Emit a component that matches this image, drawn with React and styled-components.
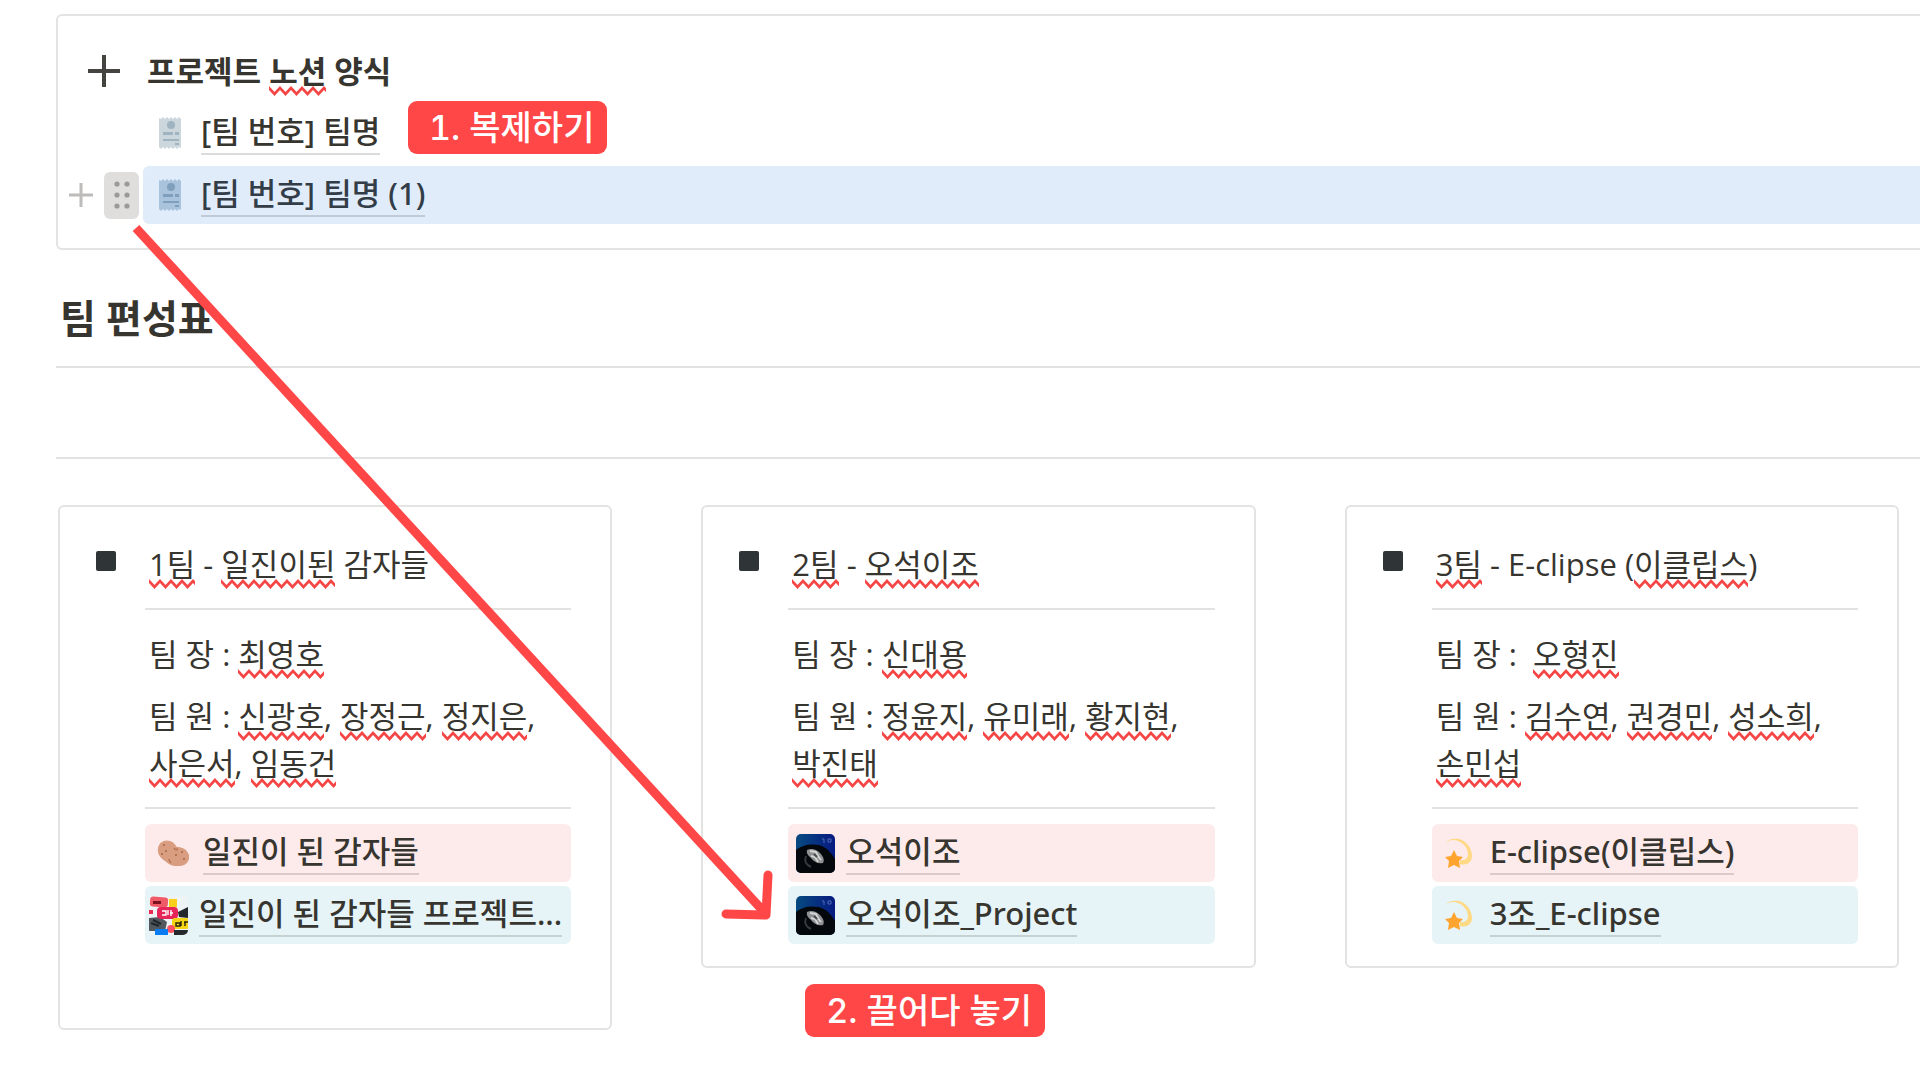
import React from "react";
import styled, { createGlobalStyle } from "styled-components";

const GlobalStyle = createGlobalStyle`
  * { box-sizing: border-box; }
  body {
    margin: 0;
    background: #fff;
    color: #37352f;
    font-family: "Open Sans", "Noto Sans CJK KR", sans-serif;
    font-size: 31px;
    line-height: 47px;
  }
  p, h1, h2 { margin: 0; }
`;

const squiggle = encodeURIComponent(
  '<svg xmlns="http://www.w3.org/2000/svg" width="11" height="10"><path d="M-5.5 8 L0 2 L5.5 8 L11 2 L16.5 8" fill="none" stroke="#f54545" stroke-width="2.6"/></svg>'
);

const Page = styled.main`position: relative; min-height: 100vh; padding: 14px 0 0 56px; overflow: hidden;`;

const TemplateBox = styled.section`
  display: grid;
  gap: 4px;
  padding: 26px 0 24px;
  border: 2px solid #e3e3e2;
  border-right: none;
  border-radius: 6px 0 0 6px;
`;
const TemplateRow = styled.div`position: relative; display: grid; grid-template-columns: 85px 1fr;`;
const Gutter = styled.div`display: flex; align-items: center; padding-left: ${(p) => p.$pad}px;`;
const BoxTitle = styled.h1`padding: 6px 4px 5px; font-size: 31px; font-weight: 700;`;

const AddButton = styled.button`display: flex; width: 24px; padding: 0; border: none; background: none;`;
const HandleButton = styled.button`
  display: flex;
  align-items: center;
  justify-content: center;
  width: 35px;
  height: 47px;
  margin-left: 11px;
  padding: 0;
  border: none;
  border-radius: 6px;
  background: #dfdedd;
`;

const PageLink = styled.a`
  display: flex;
  align-items: center;
  height: 58px;
  padding-left: ${(p) => (p.$tight ? 0 : 4)}px;
  border-radius: ${(p) => (p.$bleed ? "6px 0 0 6px" : "6px")};
  background: ${(p) => p.$bg || "transparent"};
  color: ${(p) => p.$color || "#37352f"};
  font-family: "Noto Sans", "Noto Sans CJK KR", sans-serif;
  font-weight: 500;
  text-decoration: none;
  white-space: nowrap;
`;
const LinkIcon = styled.span`display: flex; justify-content: center; width: 47px; margin-right: 7px;`;
const LinkText = styled.span`height: 43px; line-height: 39px; border-bottom: 2px solid rgba(55, 53, 47, 0.18);`;

const Heading = styled.h2`margin: 42px 0 22px; padding-left: 4px; font-size: 39px; line-height: 52px; font-weight: 700;`;
const Rule = styled.hr`margin: 0 0 ${(p) => p.$space}px; border: none; border-top: 2px solid #e2e2e1;`;

const Teams = styled.section`
  display: grid;
  grid-template-columns: repeat(3, 1fr);
  align-items: start;
  gap: 89px;
  padding: 0 21px 0 2px;
`;
const TeamColumn = styled.div`position: relative;`;
const TeamCard = styled.article`
  display: grid;
  grid-template-columns: 85px 1fr;
  padding: 28px 39px 22px 0;
  border: 2px solid #e3e3e2;
  border-radius: 6px;
`;
const Bullet = styled.span`width: 20px; height: 20px; margin: 16px 0 0 36px; border-radius: 2px; background: #2f3437;`;
const TeamBody = styled.div`min-width: 0;`;
const Line = styled.p`padding: 6px 4px 5px; white-space: pre-wrap;`;
const CardRule = styled.hr`margin: 15px 0; border: none; border-top: 2px solid #e2e2e1;`;
const People = styled.div`display: grid; gap: 4px;`;
const Links = styled.div`display: grid; gap: 4px;`;
const EmptyBlock = styled.div`height: 58px;`;
const Typo = styled.span`
  padding-bottom: 4px;
  background: url("data:image/svg+xml,${squiggle}") repeat-x left bottom;
`;

const Tag = styled.strong`
  position: absolute;
  padding: 3px 13px 3px 21px;
  border-radius: 9px;
  background: #ff4747;
  color: #fff;
  font-family: Inter, "Noto Sans CJK KR", sans-serif;
  font-size: 34px;
  font-weight: 500;
  font-variant-numeric: tabular-nums;
  white-space: nowrap;
`;
const CopyTag = styled(Tag)`top: -3px; left: 350px;`;
const DropTag = styled(Tag)`top: calc(100% + 16px); left: 104px;`;
const Arrow = styled.svg`position: absolute; top: 0; left: 0; pointer-events: none;`;

const PlusIcon = ({ size, width, color }) => (
  <svg width={size} height={size} viewBox="0 0 32 32" aria-hidden="true">
    <path d="M16 0v32M0 16h32" stroke={color} strokeWidth={width} />
  </svg>
);

const DotsIcon = () => (
  <svg width="18" height="30" viewBox="0 0 18 30" fill="#9b9a98" aria-hidden="true">
    {[4, 15, 26].map((y) => (
      <g key={y}>
        <circle cx="4" cy={y} r="2.6" />
        <circle cx="14" cy={y} r="2.6" />
      </g>
    ))}
  </svg>
);

const ReceiptIcon = ({ paper, ink }) => (
  <svg width="24" height="32" viewBox="0 0 24 32" aria-hidden="true">
    <path d="M0 1l2 1 2-2 2 2 2-2 2 2 2-2 2 2 2-2 2 2 2-2 2 2v29l-2-1-2 2-2-2-2 2-2-2-2 2-2-2-2 2-2-2-2 2-2-2z" fill={paper} />
    <circle cx="12" cy="8" r="4" fill={ink} />
    <path d="M4 15h10v3H4zM16 15h4v3h-4zM4 22h16v2H4zM16 26h4v2h-4z" fill={ink} />
  </svg>
);

const PotatoIcon = () => (
  <svg width="32" height="26" viewBox="0 0 32 26" aria-hidden="true">
    <path d="M1 8C2 2 8-1 13 1c4 1 5 4 7 6 5 0 10 2 12 8 1 6-3 11-9 11-6 1-11-1-15-5C3 18 0 13 1 8z" fill="#d99e82" />
    <path d="M17 8c1 2 2 2 4 1M12 19c0 2 1 3 2 4" stroke="#b97452" strokeWidth="1.5" fill="none" />
    <g fill="#a8643f">
      <circle cx="5" cy="14" r="1" /><circle cx="9" cy="11" r="1" /><circle cx="7" cy="5" r="1" />
      <circle cx="25" cy="12" r="1" /><circle cx="27" cy="19" r="1" /><circle cx="19" cy="15" r="1" />
    </g>
  </svg>
);

const StickerIcon = () => (
  <svg width="39" height="39" viewBox="0 0 39 39" aria-hidden="true">
    <clipPath id="stickerClip"><rect width="39" height="39" rx="5" /></clipPath>
    <g clipPath="url(#stickerClip)">
      <rect width="39" height="39" fill="#eef3f5" />
      <rect x="1" y="1" width="18" height="10" rx="3" fill="#ef5a66" transform="rotate(4 10 6)" />
      <path d="M4 5h8v3H4z" fill="#7b1220" />
      <rect x="20" y="3" width="8" height="8" fill="#f9cf1b" />
      <path d="M29 16l10-5v11l-9-1z" fill="#25282b" />
      <rect x="0" y="14" width="4" height="4" fill="#e92a55" />
      <path d="M0 22l11-1 7 5-2 9H0z" fill="#51585e" />
      <path d="M2 27l8 3M4 24l8 4" stroke="#20262a" strokeWidth="2" />
      <rect x="8" y="11" width="21" height="12" rx="4" fill="#e62658" />
      <path d="M13 15h4v4h-4M19 14v5M22 14v6M21 17h3" stroke="#fff" strokeWidth="1.4" fill="none" />
      <rect x="23" y="22" width="17" height="11" rx="3" fill="#f7d514" />
      <path d="M27 27h4v3h-4zM32 25v5M35 26h4M36 26v4" stroke="#27230a" strokeWidth="1.4" fill="none" />
      <circle cx="22" cy="33" r="4" fill="#ff5365" />
      <rect x="6" y="33" width="13" height="6" fill="#087cf0" />
      <path d="M25 34h14v5H25z" fill="#25292c" />
    </g>
  </svg>
);

const SpaceIcon = ({ id }) => (
  <svg width="39" height="39" viewBox="0 0 39 39" aria-hidden="true">
    <defs>
      <linearGradient id={id} x1="0" y1="0" x2="1" y2="0">
        <stop offset="0" stopColor="#064a80" />
        <stop offset="1" stopColor="#071a80" />
      </linearGradient>
      <clipPath id={`${id}Clip`}><rect width="39" height="39" rx="5" /></clipPath>
    </defs>
    <g clipPath={`url(#${id}Clip)`}>
      <rect width="39" height="39" fill={`url(#${id})`} />
      <path d="M0 16C8 10 15 10 23 11c8 2 12 8 16 14v14H0z" fill="#04070c" />
      <path d="M10 22c-2 5 0 9 5 11" stroke="#353a40" strokeWidth="2" fill="none" />
      <path d="M11 16c4-2 9-1 13 3 3 3 5 7 3 10-5 1-9-1-12-5-2-2-5-4-4-8z" fill="#8d9193" />
      <path d="M14 17l6 1 2 4 3 4M15 22l4 1 3 5" stroke="#d2d4d4" strokeWidth="2" fill="none" />
      <path d="M18 20l3 3" stroke="#44484b" strokeWidth="2" />
      <path d="M26 5h2v4M32 5h3v3h-3z" stroke="#4f6db8" strokeWidth="1" fill="none" />
    </g>
  </svg>
);

const DizzyIcon = () => (
  <svg width="28" height="30" viewBox="0 0 28 30" aria-hidden="true">
    <path d="M1 5C3 1 9 0 14 1c8 2 13 10 13 17 0 6-5 10-12 8v-4c4 1 8-1 8-6C23 9 16 2 8 2 5 2 3 3 1 5z" fill="#ffd983" />
    <path d="M9 12l3 6 6 1-4 4 1 7-6-3-6 3 1-7-4-4 6-1z" fill="#ffa42e" />
  </svg>
);

const PINK = "#fdebec";
const BLUE = "#e6f3f7";

// words wrapped in ~ are flagged by the spell checker
const renderLine = (text) =>
  text.split("~").map((part, i) => (i % 2 ? <Typo key={i}>{part}</Typo> : part));

const teams = [
  {
    title: "~1팀~ - ~일진이된~ 감자들",
    leader: "팀 장 : ~최영호~",
    members: "팀 원 : ~신광호~, ~장정근~, ~정지은~, ~사은서~, ~임동건~",
    links: [
      { text: "일진이 된 감자들", icon: <PotatoIcon />, bg: PINK },
      { text: "일진이 된 감자들 프로젝트...", icon: <StickerIcon />, bg: BLUE, tight: true },
    ],
    emptyBlock: true,
  },
  {
    title: "~2팀~ - ~오석이조~",
    leader: "팀 장 : ~신대용~",
    members: "팀 원 : ~정윤지~, ~유미래~, ~황지현~, ~박진태~",
    links: [
      { text: "오석이조", icon: <SpaceIcon id="spaceA" />, bg: PINK },
      { text: "오석이조_Project", icon: <SpaceIcon id="spaceB" />, bg: BLUE },
    ],
    tag: "2. 끌어다 놓기",
  },
  {
    title: "~3팀~ - E-clipse (~이클립스~)",
    leader: "팀 장 :  ~오형진~",
    members: "팀 원 : ~김수연~, ~권경민~, ~성소희~, ~손민섭~",
    links: [
      { text: "E-clipse(이클립스)", icon: <DizzyIcon />, bg: PINK },
      { text: "3조_E-clipse", icon: <DizzyIcon />, bg: BLUE },
    ],
  },
];

const Team = ({ team }) => (
  <TeamColumn>
    <TeamCard>
      <Bullet />
      <TeamBody>
        <Line>{renderLine(team.title)}</Line>
        <CardRule />
        <People>
          <Line>{renderLine(team.leader)}</Line>
          <Line>{renderLine(team.members)}</Line>
        </People>
        <CardRule />
        <Links>
          {team.links.map((link) => (
            <PageLink key={link.text} href="#" $bg={link.bg} $tight={link.tight}>
              <LinkIcon>{link.icon}</LinkIcon>
              <LinkText>{link.text}</LinkText>
            </PageLink>
          ))}
          {team.emptyBlock && <EmptyBlock />}
        </Links>
      </TeamBody>
    </TeamCard>
    {team.tag && <DropTag>{team.tag}</DropTag>}
  </TeamColumn>
);

const App = () => {
  return (
    <Page>
      <GlobalStyle />
      <TemplateBox>
        <TemplateRow>
          <Gutter $pad={30}><PlusIcon size={32} width={4} color="#454440" /></Gutter>
          <BoxTitle>{renderLine("프로젝트 ~노션~ 양식")}</BoxTitle>
        </TemplateRow>
        <TemplateRow>
          <Gutter $pad={0} />
          <PageLink href="#">
            <LinkIcon><ReceiptIcon paper="#ccd6dd" ink="#9fb3c1" /></LinkIcon>
            <LinkText>[팀 번호] 팀명</LinkText>
          </PageLink>
          <CopyTag>1. 복제하기</CopyTag>
        </TemplateRow>
        <TemplateRow>
          <Gutter $pad={11}>
            <AddButton type="button" aria-label="블록 추가"><PlusIcon size={24} width={4} color="#bdbcba" /></AddButton>
            <HandleButton type="button" aria-label="블록 이동"><DotsIcon /></HandleButton>
          </Gutter>
          <PageLink href="#" $bleed $bg="#e1ecfa" $color="#323d48">
            <LinkIcon><ReceiptIcon paper="#a9c3dc" ink="#7f9fbd" /></LinkIcon>
            <LinkText>[팀 번호] 팀명 (1)</LinkText>
          </PageLink>
        </TemplateRow>
      </TemplateBox>
      <Heading>팀 편성표</Heading>
      <Rule $space={89} />
      <Rule $space={46} />
      <Teams>
        {teams.map((team) => <Team key={team.title} team={team} />)}
      </Teams>
      <Arrow width="800" height="940" viewBox="0 0 800 940" fill="none" stroke="#ff4747" strokeWidth="9" aria-hidden="true">
        <path d="M136 228L766 914" />
        <path d="M768 875L766 915L726 914" strokeLinecap="round" strokeLinejoin="round" />
      </Arrow>
    </Page>
  );
};

export default App;
